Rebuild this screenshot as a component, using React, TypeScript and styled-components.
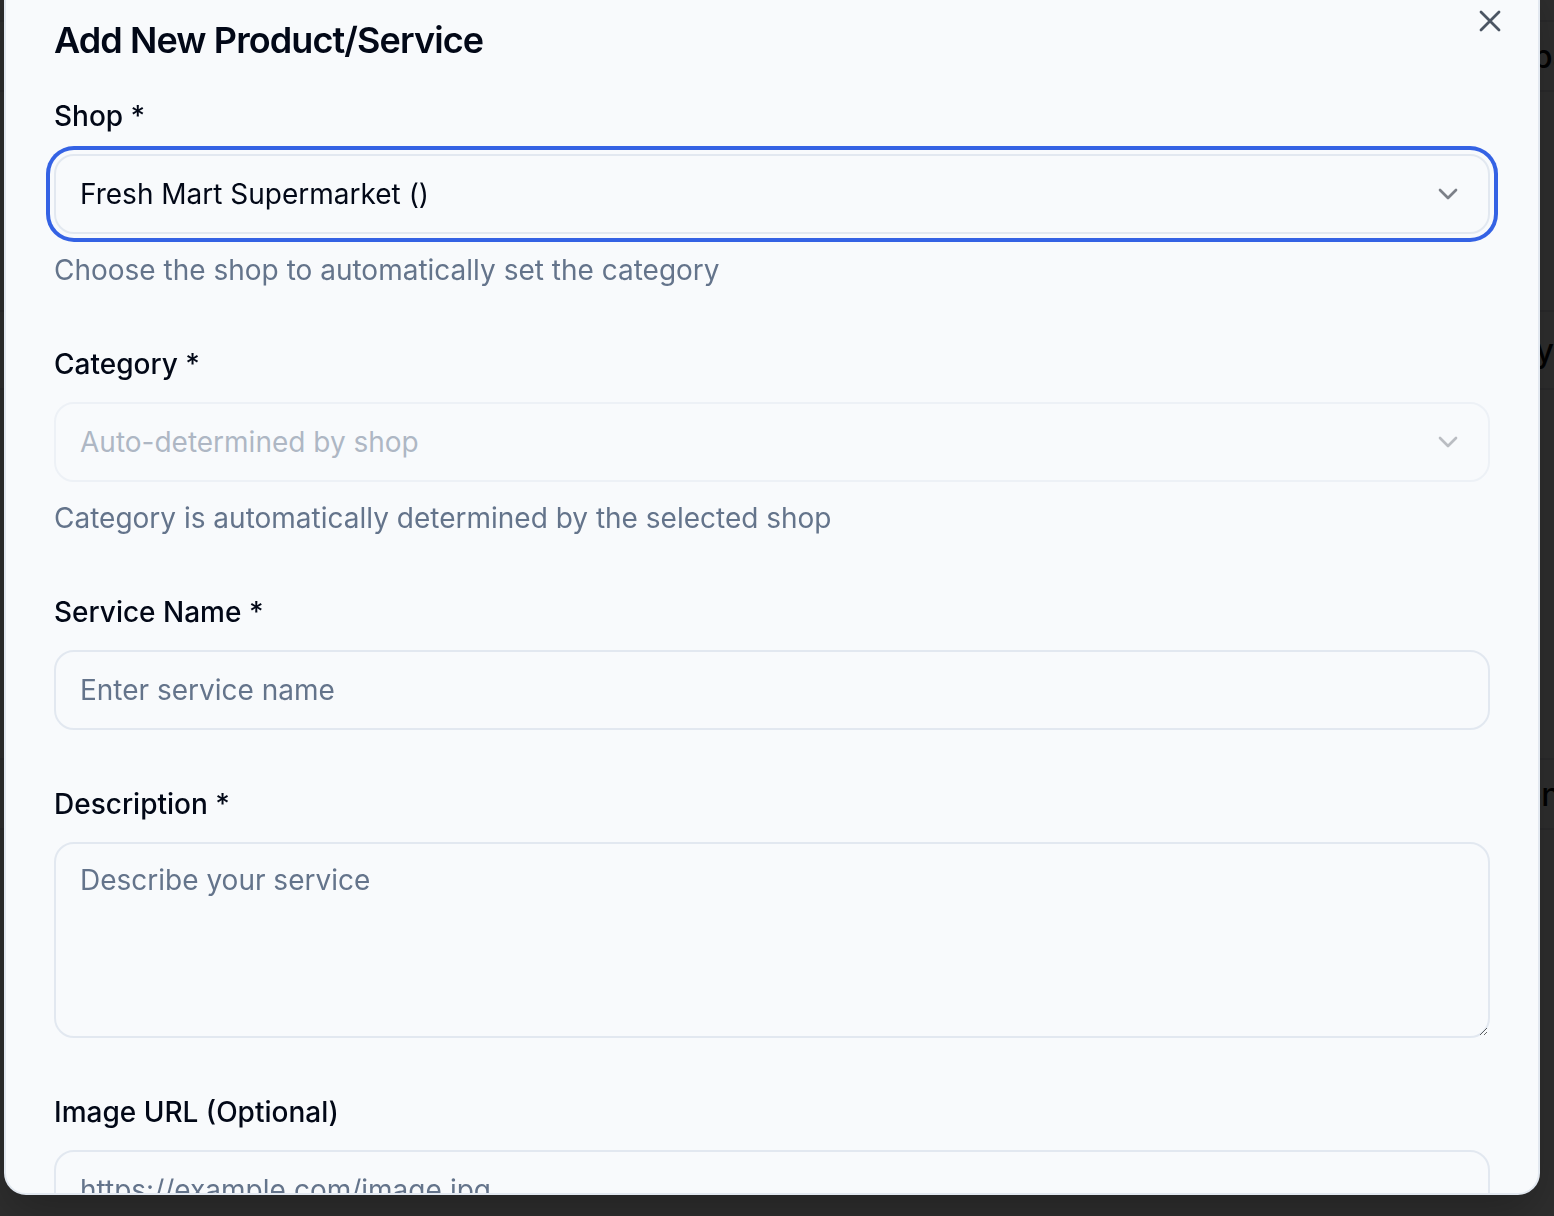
import React from 'react';
import styled, { createGlobalStyle } from 'styled-components';

const GlobalStyle = createGlobalStyle`
  html, body {
    margin: 0;
    padding: 0;
    height: 100%;
    overflow: hidden;
  }
  body {
    font-family: Inter, "Noto Sans", sans-serif;
    background: #ffffff;
    color: #020817;
  }
  * {
    box-sizing: border-box;
  }
`;

/* page behind the dialog */
const Page = styled.div`
  height: 1216px;
  display: flex;
  flex-direction: column;
  background: #fbfbfb;
`;

const PageRow = styled.div<{ $h: number; $indent?: number }>`
  flex: 0 0 ${(p) => p.$h}px;
  display: flex;
  align-items: center;
  padding-left: ${(p) => p.$indent ?? 0}px;
  border-bottom: 2px solid #e5e7eb;
  font-size: 32px;
  font-weight: 500;
  white-space: nowrap;
  overflow: hidden;
  color: #0b0b0b;
`;

const Overlay = styled.div`
  position: fixed;
  inset: 0;
  background: rgba(0, 0, 0, 0.82);
`;

/* dialog */
const Dialog = styled.div`
  position: fixed;
  left: 4px;
  top: -30px;
  bottom: 21px;
  width: 1536px;
  padding: 48px;
  background: #f8fafc;
  border: 2px solid #e2e8f0;
  border-radius: 22px;
  overflow: hidden;
  display: flex;
  flex-direction: column;
  box-shadow: 0 20px 50px rgba(0, 0, 0, 0.25);
`;

const Title = styled.h2`
  margin: 0;
  font-size: 36px;
  line-height: 40px;
  font-weight: 600;
  letter-spacing: -0.9px;
  color: #020817;
`;

const CloseButton = styled.button`
  position: absolute;
  top: 33px;
  right: 32px;
  width: 32px;
  height: 32px;
  padding: 0;
  border: none;
  background: transparent;
  display: flex;
  align-items: center;
  justify-content: center;
  color: #4b5563;
  cursor: pointer;
`;

const Form = styled.form`
  margin-top: 42px;
  display: flex;
  flex-direction: column;
  gap: 60px;
`;

const Field = styled.div`
  display: flex;
  flex-direction: column;
`;

const Label = styled.label`
  font-size: 28px;
  line-height: 28px;
  font-weight: 500;
  color: #020817;
  margin-bottom: 24px;
`;

const Helper = styled.p`
  margin: 16px 0 0;
  font-size: 28px;
  line-height: 40px;
  color: #64748b;
`;

const SelectBox = styled.button<{ $focused?: boolean }>`
  height: 80px;
  width: 100%;
  padding: 0 24px;
  display: flex;
  align-items: center;
  justify-content: space-between;
  border: 2px solid #e2e8f0;
  border-radius: 20px;
  background: #f8fafc;
  font-family: inherit;
  font-size: 28px;
  color: #020817;
  text-align: left;
  box-shadow: ${(p) =>
    p.$focused ? '0 0 0 4px #f8fafc, 0 0 0 8px #3462e4' : 'none'};

  &:disabled {
    opacity: 0.5;
    cursor: not-allowed;
  }
`;

const Placeholder = styled.span`
  color: #64748b;
`;

const Chevron = styled.svg`
  width: 32px;
  height: 32px;
  opacity: 0.5;
  flex-shrink: 0;
`;

const TextInput = styled.input`
  height: 80px;
  width: 100%;
  padding: 0 24px;
  border: 2px solid #e2e8f0;
  border-radius: 20px;
  background: #f8fafc;
  font-family: inherit;
  font-size: 28px;
  color: #020817;
  outline: none;

  &::placeholder {
    color: #64748b;
  }
`;

const TextArea = styled.textarea`
  height: 196px;
  width: 100%;
  padding: 16px 24px;
  border: 2px solid #e2e8f0;
  border-radius: 20px;
  background: #f8fafc;
  font-family: inherit;
  font-size: 28px;
  line-height: 40px;
  color: #020817;
  outline: none;
  resize: vertical;

  &::placeholder {
    color: #64748b;
  }
`;

function ChevronDown(): JSX.Element {
  return (
    <Chevron viewBox="0 0 24 24" fill="none" stroke="#020817" strokeWidth={2} strokeLinecap="round" strokeLinejoin="round">
      <path d="m6 9 6 6 6-6" />
    </Chevron>
  );
}

function App(): JSX.Element {
  return (
    <>
      <GlobalStyle />
      <Page>
        <PageRow $h={22} />
        <PageRow $h={70} $indent={1512}>Spa</PageRow>
        <PageRow $h={220} />
        <PageRow $h={78} $indent={1428}>Delivery</PageRow>
        <PageRow $h={370} />
        <PageRow $h={70} $indent={1522}>on</PageRow>
      </Page>
      <Overlay />
      <Dialog role="dialog">
        <Title>Add New Product/Service</Title>
        <CloseButton type="button" aria-label="Close">
          <svg width="22" height="22" viewBox="0 0 22 22" fill="none" stroke="currentColor" strokeWidth={2.8} strokeLinecap="round">
            <path d="M2 2 20 20M20 2 2 20" />
          </svg>
        </CloseButton>
        <Form onSubmit={(e) => e.preventDefault()}>
          <Field>
            <Label>Shop *</Label>
            <SelectBox type="button" $focused>
              <span>Fresh Mart Supermarket ()</span>
              <ChevronDown />
            </SelectBox>
            <Helper>Choose the shop to automatically set the category</Helper>
          </Field>
          <Field>
            <Label>Category *</Label>
            <SelectBox type="button" disabled>
              <Placeholder>Auto-determined by shop</Placeholder>
              <ChevronDown />
            </SelectBox>
            <Helper>Category is automatically determined by the selected shop</Helper>
          </Field>
          <Field>
            <Label>Service Name *</Label>
            <TextInput placeholder="Enter service name" />
          </Field>
          <Field>
            <Label>Description *</Label>
            <TextArea placeholder="Describe your service" />
          </Field>
          <Field>
            <Label>Image URL (Optional)</Label>
            <TextInput placeholder="https://example.com/image.jpg" />
          </Field>
        </Form>
      </Dialog>
    </>
  );
}

export default App;
